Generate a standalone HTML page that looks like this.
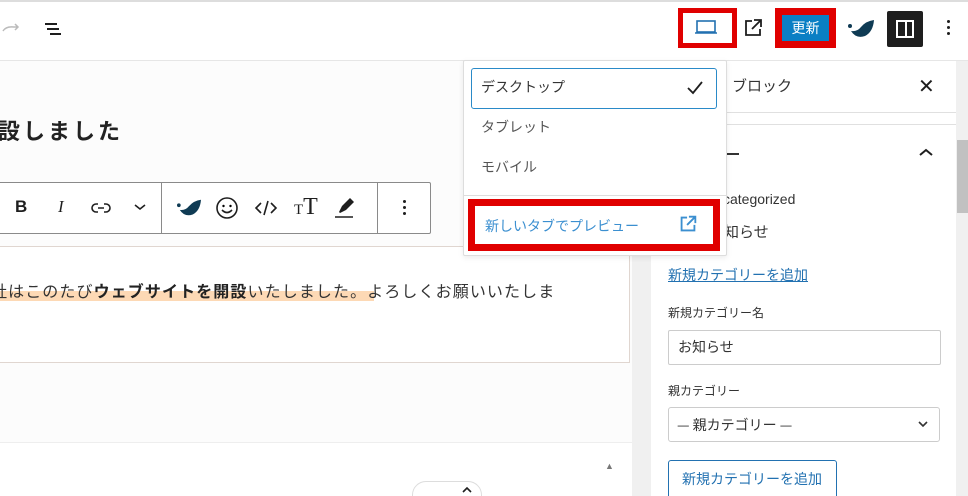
<!DOCTYPE html>
<html style="width:968px;height:496px;overflow:hidden"><head><meta charset="utf-8"><style>
*{box-sizing:border-box;margin:0;padding:0}
body{width:968px;height:496px;overflow:hidden;background:#fff;font-family:"Liberation Sans","Noto Sans CJK JP",sans-serif;position:relative;color:#1e1e1e}
.a{position:absolute}
.jp{font-family:"Noto Sans CJK JP",sans-serif}
</style></head><body>
<div class="a" style="left:0;top:0;width:968px;height:2px;background:#ddd"></div>
<div class="a" style="left:0;top:60px;width:968px;height:1px;background:#e6e6e6"></div>
<svg class="a" style="left:0;top:18px" width="70" height="24" viewBox="0 0 70 24"><path d="M3 13 Q6 8 14 9 L18 9 M15 6 L18 9 L15 12" stroke="#bbb" stroke-width="1.5" fill="none"/><path d="M45 6h12M47 11h12M50 16h11" stroke="#1e1e1e" stroke-width="2"/></svg>
<div class="a" style="left:678px;top:8px;width:59px;height:40px;border:5px solid #e00000;background:#fff"></div>
<svg class="a" style="left:692px;top:17px" width="30" height="22"><rect x="5" y="4" width="18" height="11" fill="none" stroke="#2271b1" stroke-width="1.6"/><path d="M3 16h22" stroke="#2271b1" stroke-width="1.6"/></svg>
<svg class="a" style="left:741px;top:16px" width="24" height="24" viewBox="0 0 24 24"><path d="M11 5H5v14h14v-6" fill="none" stroke="#1e1e1e" stroke-width="1.8"/><path d="M13 4h7v7M20 4l-9 9" fill="none" stroke="#1e1e1e" stroke-width="1.8"/></svg>
<div class="a" style="left:775px;top:8px;width:61px;height:40px;background:#e00000"></div>
<div class="a jp" style="left:782px;top:15px;width:47px;height:26px;background:#0a7fc4;color:#fff;font-size:14px;line-height:26px;text-align:center">更新</div>
<svg class="a" style="left:846px;top:16px" width="30" height="26" viewBox="0 0 30 26"><path d="M5 15 Q10 23 19 20 Q27 16 28 4 Q20 5 15 11 Q11 16 5 15Z" fill="#0f3b54"/><circle cx="4" cy="10" r="2" fill="#0f3b54"/></svg>
<div class="a" style="left:887px;top:11px;width:36px;height:36px;background:#1e1e1e;border-radius:2px"></div>
<div class="a" style="left:896px;top:20px;width:18px;height:18px;border:2px solid #fff"></div>
<div class="a" style="left:905px;top:20px;width:2px;height:18px;background:#fff"></div>
<div class="a" style="left:947px;top:20px;width:3px;height:3px;background:#1e1e1e;border-radius:50%;box-shadow:0 6px #1e1e1e,0 12px #1e1e1e"></div>

<div class="a" style="left:0;top:61px;width:632px;height:435px;background:#fcfcfc"></div>
<div class="a jp" style="left:-2px;top:114px;font-size:22px;font-weight:bold;letter-spacing:3px;color:#222">設しました</div>
<div class="a" style="left:-2px;top:182px;width:433px;height:52px;border:1px solid #8a8a8a;border-radius:2px;background:#fff"></div>
<div class="a" style="left:161px;top:182px;width:1px;height:52px;background:#8a8a8a"></div>
<div class="a" style="left:377px;top:182px;width:1px;height:52px;background:#8a8a8a"></div>
<div class="a" style="left:15px;top:197px;font-size:17px;font-weight:bold">B</div>
<div class="a" style="left:58px;top:197px;font-size:17px;font-style:italic;font-family:'Liberation Serif',serif">I</div>
<svg class="a" style="left:90px;top:198px" width="22" height="20"><path d="M8 6H6a4 4 0 0 0 0 8h2M14 6h2a4 4 0 0 1 0 8h-2M8 10h6" fill="none" stroke="#1e1e1e" stroke-width="1.6"/></svg>
<svg class="a" style="left:133px;top:202px" width="14" height="10"><path d="M2 3l5 4 5-4" fill="none" stroke="#1e1e1e" stroke-width="1.6"/></svg>
<svg class="a" style="left:175px;top:196px" width="28" height="24" viewBox="0 0 30 26"><path d="M5 15 Q10 23 19 20 Q27 16 28 4 Q20 5 15 11 Q11 16 5 15Z" fill="#0f3b54"/><circle cx="4" cy="10" r="2" fill="#0f3b54"/></svg>
<svg class="a" style="left:215px;top:196px" width="24" height="24"><circle cx="12" cy="12" r="10" fill="none" stroke="#1e1e1e" stroke-width="1.6"/><circle cx="8.5" cy="10" r="1.2"/><circle cx="15.5" cy="10" r="1.2"/><path d="M7 14q5 5 10 0" fill="none" stroke="#1e1e1e" stroke-width="1.6"/></svg>
<svg class="a" style="left:254px;top:198px" width="24" height="20"><path d="M7 5L2 10l5 5M17 5l5 5-5 5M14 3l-4 14" fill="none" stroke="#1e1e1e" stroke-width="1.6"/></svg>
<div class="a" style="left:294px;top:194px;font-family:'Liberation Serif',serif;font-size:24px"><span style="font-size:15px">T</span>T</div>
<svg class="a" style="left:333px;top:196px" width="24" height="24"><path d="M6 16l3-6 8-8 4 4-8 8-6 3z" fill="#1e1e1e"/><path d="M2 21h18" stroke="#1e1e1e" stroke-width="1.5"/></svg>
<div class="a" style="left:403px;top:200px;width:3px;height:3px;background:#1e1e1e;border-radius:50%;box-shadow:0 6px #1e1e1e,0 12px #1e1e1e"></div>
<div class="a" style="left:-2px;top:246px;width:632px;height:117px;border:1px solid #e0d6d0;background:#fff"></div>
<div class="a" style="left:0;top:291px;width:374px;height:10px;background:#fdd9b5"></div>
<div class="a jp" style="left:-9px;top:278px;font-size:16px;color:#333;white-space:nowrap;letter-spacing:1.1px">社はこのたび<b style="color:#222">ウェブサイトを開設</b>いたしました。よろしくお願いいたしま</div>
<div class="a" style="left:0;top:442px;width:632px;height:1px;background:#eee"></div>
<div class="a" style="left:0;top:443px;width:632px;height:53px;background:#fff"></div>
<div class="a" style="left:605px;top:461px;font-size:9px;color:#777">▲</div>
<div class="a" style="left:412px;top:481px;width:70px;height:30px;border:1px solid #ddd;border-radius:14px;background:#fff"></div>
<svg class="a" style="left:461px;top:486px" width="12" height="8"><path d="M2 6l4-4 4 4" fill="none" stroke="#1e1e1e" stroke-width="1.6"/></svg>

<div class="a" style="left:632px;top:61px;width:336px;height:435px;background:#f0f0f0"></div>
<div class="a" style="left:651px;top:61px;width:305px;height:435px;background:#fff"></div>
<div class="a" style="left:651px;top:112px;width:305px;height:1px;background:#e0e0e0"></div>
<div class="a" style="left:651px;top:124px;width:305px;height:1px;background:#e0e0e0"></div>
<div class="a" style="left:957px;top:140px;width:11px;height:73px;background:#c1c1c1"></div>
<div class="a jp" style="left:732px;top:75px;font-size:15px;color:#333">ブロック</div>
<div class="a" style="left:918px;top:74px;font-size:20px;color:#1e1e1e">✕</div>
<div class="a" style="left:725px;top:153px;width:14px;height:1.5px;background:#333"></div>
<svg class="a" style="left:918px;top:147px" width="16" height="10"><path d="M2 8l6-5 6 5" fill="none" stroke="#1e1e1e" stroke-width="2"/></svg>
<div class="a" style="left:723px;top:191px;font-size:14px;color:#333">categorized</div>
<div class="a jp" style="left:724px;top:221px;font-size:15px;color:#333">知らせ</div>
<div class="a jp" style="left:668px;top:265px;font-size:14px;color:#2271b1;text-decoration:underline">新規カテゴリーを追加</div>
<div class="a jp" style="left:668px;top:304px;font-size:12px;color:#333">新規カテゴリー名</div>
<div class="a" style="left:668px;top:330px;width:273px;height:35px;border:1px solid #ccc;border-radius:2px"></div>
<div class="a jp" style="left:678px;top:337px;font-size:14px;color:#333">お知らせ</div>
<div class="a jp" style="left:668px;top:382px;font-size:12px;color:#333">親カテゴリー</div>
<div class="a" style="left:668px;top:407px;width:272px;height:35px;border:1px solid #ccc;border-radius:3px"></div>
<div class="a jp" style="left:677px;top:415px;font-size:14px;color:#333">— 親カテゴリー —</div>
<svg class="a" style="left:918px;top:421px" width="10" height="7"><path d="M1 1l4 4 4-4" fill="none" stroke="#333" stroke-width="1.6"/></svg>
<div class="a" style="left:668px;top:460px;width:169px;height:40px;border:1px solid #2271b1;border-radius:3px;background:#fff"></div>
<div class="a jp" style="left:682px;top:469px;font-size:14px;color:#2271b1">新規カテゴリーを追加</div>

<div class="a" style="left:463px;top:60px;width:264px;height:196px;background:#fff;border:1px solid #ddd;border-radius:2px;box-shadow:0 2px 6px rgba(0,0,0,.08)"></div>
<div class="a" style="left:471px;top:68px;width:246px;height:41px;border:1.5px solid #2a8ac8;border-radius:3px"></div>
<div class="a jp" style="left:481px;top:77px;font-size:14px;color:#333">デスクトップ</div>
<svg class="a" style="left:686px;top:80px" width="18" height="16"><path d="M2 8l5 5 9-11" fill="none" stroke="#1e1e1e" stroke-width="1.8"/></svg>
<div class="a jp" style="left:481px;top:117px;font-size:14px;color:#555">タブレット</div>
<div class="a jp" style="left:481px;top:157px;font-size:14px;color:#555">モバイル</div>
<div class="a" style="left:464px;top:195px;width:262px;height:1px;background:#ddd"></div>
<div class="a" style="left:468px;top:199px;width:252px;height:52px;border:7px solid #e00000;background:#fff"></div>
<div class="a jp" style="left:485px;top:216px;font-size:14px;color:#3b8fd0">新しいタブでプレビュー</div>
<svg class="a" style="left:677px;top:213px" width="22" height="22" viewBox="0 0 24 24"><path d="M11 5H5v14h14v-6" fill="none" stroke="#3b8fd0" stroke-width="2"/><path d="M13 4h7v7M20 4l-9 9" fill="none" stroke="#3b8fd0" stroke-width="2"/></svg>
</body></html>
